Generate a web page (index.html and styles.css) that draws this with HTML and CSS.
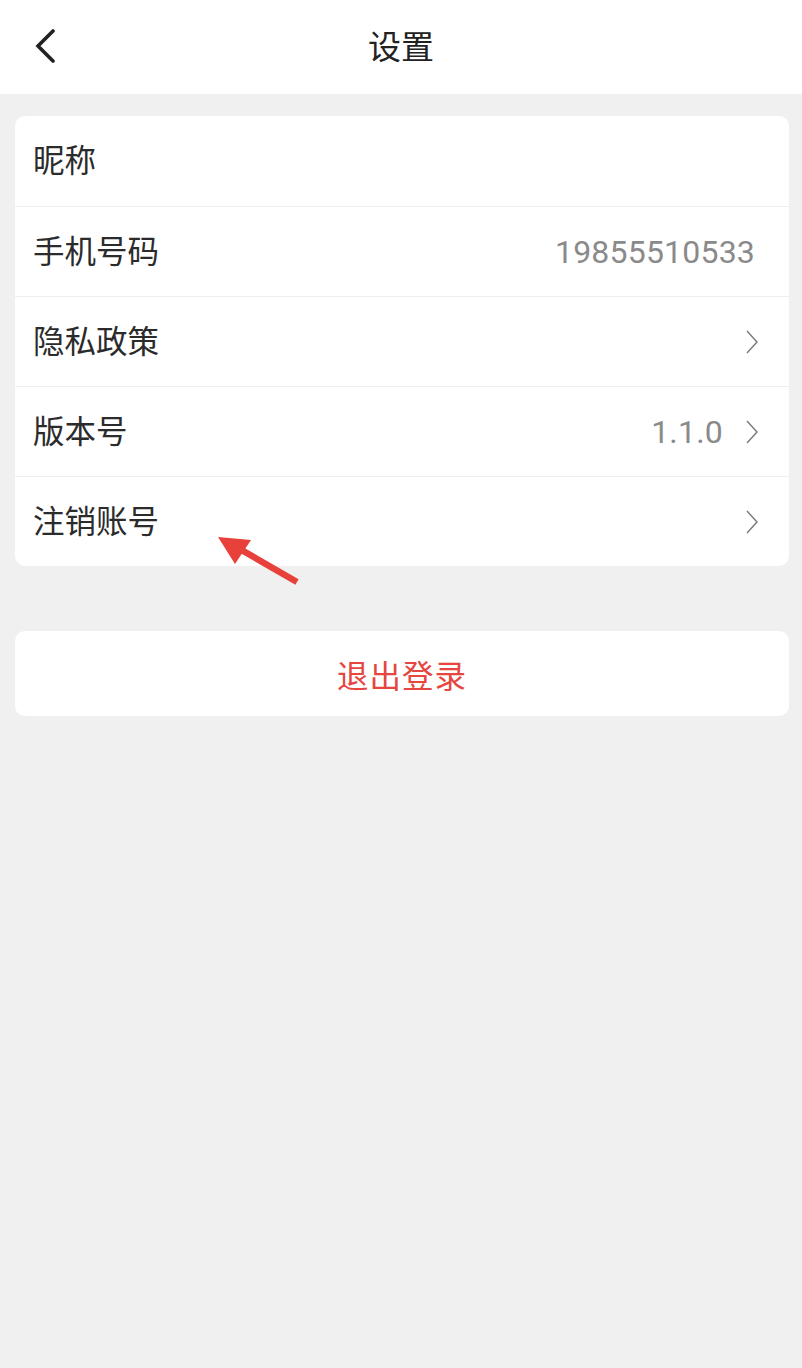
FILE: index.html
```html
<!DOCTYPE html>
<html lang="zh">
<head>
<meta charset="utf-8">
<title>设置</title>
<link rel="stylesheet" href="styles.css">
</head>
<body>
<div class="page">
  <header class="topbar">
    <svg class="back" width="24" height="36" viewBox="0 0 24 36"><path d="M19 4 L4 19 L19 34" fill="none" stroke="#222" stroke-width="3.6" stroke-linecap="round" stroke-linejoin="miter"/></svg>
    <h1 class="title">设置</h1>
  </header>
  <main class="content">
    <section class="card list">
      <div class="row"><span class="label">昵称</span></div>
      <div class="row"><span class="label">手机号码</span><span class="value">19855510533</span></div>
      <div class="row"><span class="label">隐私政策</span><svg class="chev" width="14" height="26" viewBox="0 0 14 26"><path d="M2 2 L12 13 L2 24" fill="none" stroke="#777" stroke-width="1.4"/></svg></div>
      <div class="row"><span class="label">版本号</span><span class="value with-chev">1.1.0</span><svg class="chev" width="14" height="26" viewBox="0 0 14 26"><path d="M2 2 L12 13 L2 24" fill="none" stroke="#777" stroke-width="1.4"/></svg></div>
      <div class="row"><span class="label">注销账号</span><svg class="chev" width="14" height="26" viewBox="0 0 14 26"><path d="M2 2 L12 13 L2 24" fill="none" stroke="#777" stroke-width="1.4"/></svg></div>
    </section>
    <section class="card logout">退出登录</section>
  </main>
  <svg class="annot" width="802" height="620" viewBox="0 0 802 620">
    <line x1="297" y1="582" x2="238" y2="548" stroke="#e8403a" stroke-width="6.5"/>
    <polygon points="218,537 251,540 235,564" fill="#e8403a"/>
  </svg>
</div>
</body>
</html>
```

FILE: styles.css
```css
* { box-sizing: border-box; margin: 0; padding: 0; }
html, body { width: 802px; height: 1368px; }
body {
  background: #f0f0f0;
  font-family: "Noto Sans CJK SC", "Noto Sans", Roboto, sans-serif;
  color: #2a2a2a;
}
.page { position: relative; width: 802px; min-height: 1368px; }
.topbar {
  height: 94px;
  background: #fff;
  display: flex;
  align-items: center;
  justify-content: center;
  position: relative;
}
.back { position: absolute; left: 34px; top: 27px; }
.title {
  font-size: 33px;
  font-weight: 400;
  color: #222;
  line-height: 1;
  margin-top: -4px;
}
.content {
  padding: 22px 13px 0 15px;
  display: flex;
  flex-direction: column;
  gap: 65px;
}
.card {
  background: #fff;
  border-radius: 10px;
}
.list { display: flex; flex-direction: column; }
.row {
  height: 90px;
  display: flex;
  align-items: center;
  padding: 0 30px 0 18px;
  border-top: 1px solid #efefef;
}
.row:first-child { border-top: none; }
.label { font-size: 31.5px; flex: 1; line-height: 1; color: #2b2b2b; margin-top: -4px; }
.value {
  font-family: Roboto, "Noto Sans", sans-serif;
  font-size: 32px;
  color: #8a8a8a;
  line-height: 1;
  margin-right: 4px;
  letter-spacing: 0.2px;
}
.value.with-chev { margin-right: 22px; }
.chev { display: block; }
.logout {
  height: 85px;
  display: flex;
  align-items: center;
  justify-content: center;
  font-size: 31.5px;
  color: #e5463f;
  letter-spacing: 1px;
}
.annot { position: absolute; left: 0; top: 0; pointer-events: none; }
```
